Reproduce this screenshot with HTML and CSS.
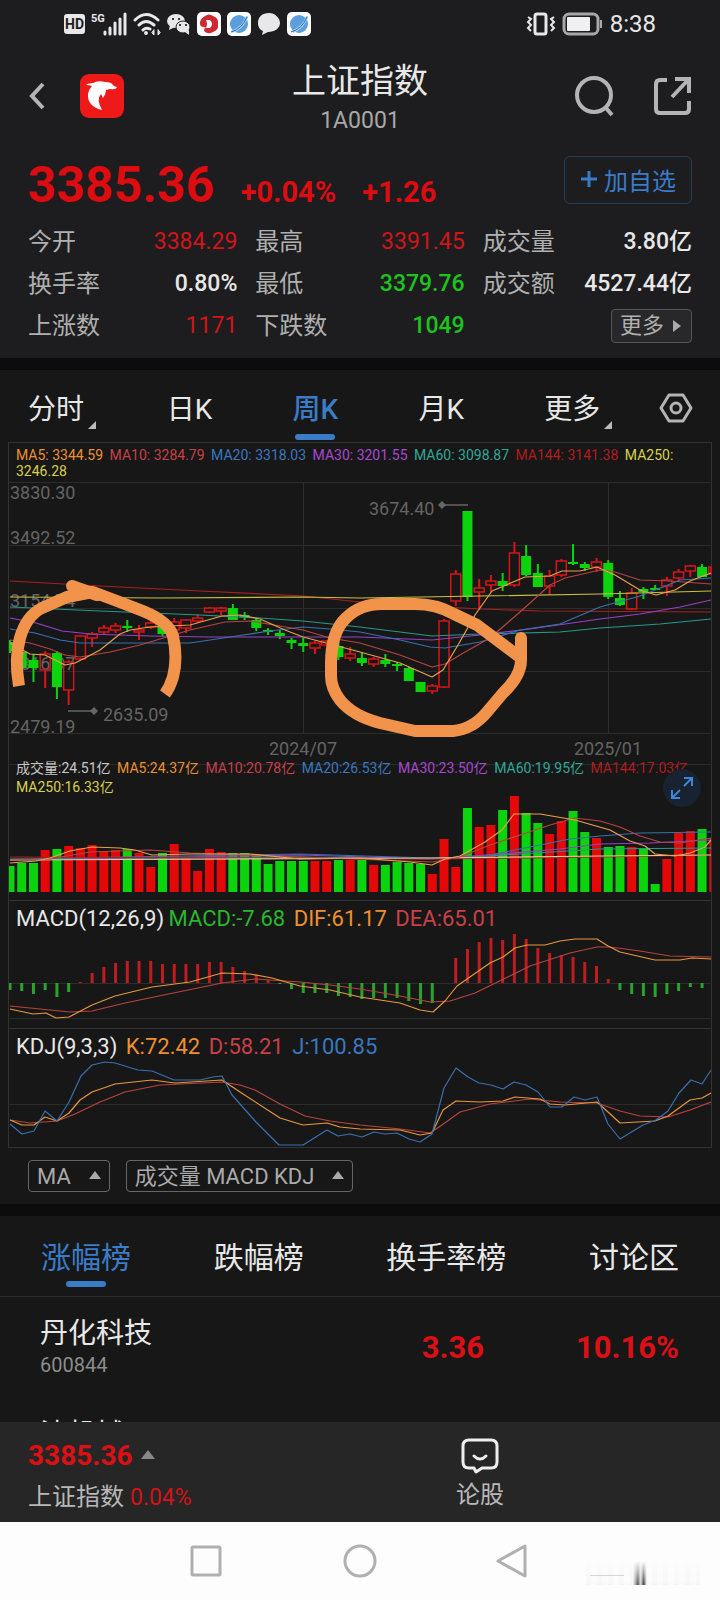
FILE: index.html
```
<!DOCTYPE html>
<html lang="zh-CN">
<head>
    <meta charset="UTF-8">
    <meta name="viewport" content="width=device-width, initial-scale=1.0">
    <title>上证指数 1A0001</title>
    <link rel="stylesheet" href="styles.css">
</head>
<body>

<div class="statusbar">
    <div class="status-left">
        <span class="hd">HD</span>
        <svg width="36" height="24" viewBox="0 0 36 24">
            <text x="0" y="10" class="net">5G</text>
            <path d="M14 22v-2M19 22v-6M24 22v-11M29 22v-15M34 22v-20" stroke="#e8e8e8" stroke-width="3" stroke-linecap="round"/>
        </svg>
        <svg width="28" height="24" viewBox="0 0 28 24" fill="none" stroke="#e8e8e8" stroke-width="3" stroke-linecap="round">
            <path d="M2 8Q13 -3 25 8M6 13Q13 6 21 13M10 18Q13 15 17 17"/>
            <circle cx="13" cy="21" r="1" stroke-width="2"/>
            <path d="M21 18v5l-2-2zM25 18v5l2-2z" stroke-width="1" fill="#e8e8e8"/>
        </svg>
        <svg width="24" height="24" viewBox="0 0 24 24">
            <ellipse cx="9" cy="9" rx="9" ry="7" fill="#e8e8e8"/>
            <path d="M3 13l-1 5 6-3z" fill="#e8e8e8"/>
            <ellipse cx="16" cy="15" rx="7" ry="6" fill="#e8e8e8" stroke="#1d1d1f"/>
            <path d="M18 20l4 3v-5z" fill="#e8e8e8"/>
            <circle cx="6" cy="7" r="1"/><circle cx="12" cy="7" r="1"/><circle cx="13" cy="13" r="1"/><circle cx="19" cy="13" r="1"/>
        </svg>
        <svg width="24" height="24" viewBox="0 0 24 24">
            <rect width="24" height="24" rx="5" fill="#fff"/>
            <path d="M8 4Q12 1 16 4Q22 6 21 12Q22 18 16 20Q11 23 7 19Q7 16 9 15Q2 16 3 10Q4 6 8 4z" fill="#d02830"/>
            <path d="M9 8h4q4 4 0 8H9q2-4 0-8z" fill="#fff"/>
        </svg>
        <svg width="24" height="24" viewBox="0 0 24 24">
            <rect width="24" height="24" rx="5" fill="#fff"/>
            <circle cx="12" cy="12" r="9" fill="#5a9fdc"/>
            <path d="M4 19Q16 14 19 4Q23 3 20 8Q15 18 6 21z" fill="#a8d4f8"/>
            <path d="M4 20Q15 17 20 5" fill="none" stroke="#2868a8"/>
        </svg>
        <svg width="24" height="24" viewBox="0 0 24 24">
            <path d="M12 1C5 1 1 5 1 11c0 4 2 7 5 8l-1 4 6-3c7 0 12-4 12-9S18 1 12 1z" fill="#e8e8e8"/>
        </svg>
        <svg width="24" height="24" viewBox="0 0 24 24">
            <rect width="24" height="24" rx="5" fill="#fff"/>
            <circle cx="12" cy="12" r="9" fill="#5a9fdc"/>
            <path d="M4 19Q16 14 19 4Q23 3 20 8Q15 18 6 21z" fill="#a8d4f8"/>
            <path d="M4 20Q15 17 20 5" fill="none" stroke="#2868a8"/>
        </svg>
    </div>
    <div class="status-right">
        <svg width="30" height="24" viewBox="0 0 30 24" fill="none" stroke="#e8e8e8" stroke-width="2">
            <rect x="9" y="2" width="11" height="20" rx="2" stroke-width="3"/>
            <path d="M2 5l3 2-3 3 3 3-3 3 3 3M28 5l-3 2 3 3-3 3 3 3-3 3"/>
        </svg>
        <svg width="42" height="24" viewBox="0 0 42 24">
            <rect x="2" y="2" width="34" height="20" rx="5" fill="none" stroke="#a8a8a8" stroke-width="3"/>
            <rect x="5" y="5" width="23" height="14" rx="1" fill="#f0f0f0"/>
            <path d="M39 8v8" stroke="#a8a8a8" stroke-width="2"/>
        </svg>
        <span class="clock">8:38</span>
    </div>
</div>

<header class="topbar">
    <div class="side">
        <button class="icon-btn" aria-label="返回">
            <svg width="18" height="30" viewBox="0 0 18 30"><path d="M15 3L4 15l11 12" fill="none" stroke="#b4b4b4" stroke-width="4"/></svg>
        </button>
        <a href="#" class="logo" aria-label="首页">
            <svg width="44" height="44" viewBox="0 0 44 44">
                <rect width="44" height="44" rx="9" fill="#ee1a1a"/>
                <path d="M6 11Q8 9 13 9Q18 6 25 8Q28 8 31 9Q33 12 37 13Q36 16 30 15L26 16Q26 20 23 24L21 20Q16 25 22 36Q7 32 8 20Q9 15 12 12Q9 11 6 11z" fill="#fff"/>
            </svg>
        </a>
    </div>
    <div class="heading">
        <h1>上证指数</h1>
        <p>1A0001</p>
    </div>
    <div class="side right">
        <button class="icon-btn" aria-label="搜索">
            <svg width="40" height="42" viewBox="0 0 40 42" fill="none" stroke="#b4b4b4" stroke-width="4"><circle cx="20" cy="20" r="17"/><path d="M32 33l6 7"/></svg>
        </button>
        <button class="icon-btn" aria-label="分享">
            <svg width="40" height="42" viewBox="0 0 40 42" fill="none" stroke="#b4b4b4" stroke-width="4"><path d="M15 5H8Q4 5 4 9v25q0 4 4 4h25q4 0 4-4v-8M23 4h14v14M36 5L20 22"/></svg>
        </button>
    </div>
</header>

<section class="quote">
    <div class="price-row">
        <strong class="price">3385.36</strong>
        <span class="change">+0.04%</span>
        <span class="change">+1.26</span>
        <button class="add"><svg width="18" height="18" viewBox="0 0 18 18"><path d="M9 1v16M1 9h16" stroke="#3a7cc8" stroke-width="3"/></svg>加自选</button>
    </div>
    <dl class="stats">
        <div><dt>今开</dt><dd class="up">3384.29</dd></div>
        <div><dt>最高</dt><dd class="up">3391.45</dd></div>
        <div><dt>成交量</dt><dd>3.80亿</dd></div>
        <div><dt>换手率</dt><dd>0.80%</dd></div>
        <div><dt>最低</dt><dd class="down">3379.76</dd></div>
        <div><dt>成交额</dt><dd>4527.44亿</dd></div>
        <div><dt>上涨数</dt><dd class="up">1171</dd></div>
        <div><dt>下跌数</dt><dd class="down">1049</dd></div>
        <div><button class="more">更多<svg width="8" height="12" viewBox="0 0 8 12"><path d="M0 0l8 6-8 6z" fill="#aaa"/></svg></button></div>
    </dl>
</section>

<section class="panel">
    <nav class="periods">
        <button>分时<i class="corner"></i></button>
        <button>日K</button>
        <button class="active">周K</button>
        <button>月K</button>
        <button>更多<i class="corner"></i></button>
        <button class="gear" aria-label="设置">
            <svg width="34" height="34" viewBox="0 0 34 34" fill="none" stroke="#b4b4b4" stroke-width="3"><path d="M10 4h14l8 13-8 13H10L2 17z" stroke-linejoin="round"/><circle cx="17" cy="17" r="5"/></svg>
        </button>
    </nav>

    <div class="chart">
        <p class="legend ma">
            <span class="c5">MA5: 3344.59</span> <span class="c10">MA10: 3284.79</span> <span class="c20">MA20: 3318.03</span> <span class="c30">MA30: 3201.55</span> <span class="c60">MA60: 3098.87</span> <span class="c144">MA144: 3141.38</span> <span class="c250">MA250:</span> <span class="c250">3246.28</span>
        </p>
        <svg id="kline" viewBox="9 2 702 276"></svg>

        <div class="volume">
            <p class="legend vol">
                <span class="total">成交量:24.51亿</span> <span class="c5">MA5:24.37亿</span> <span class="c10">MA10:20.78亿</span> <span class="c20">MA20:26.53亿</span> <span class="c30">MA30:23.50亿</span> <span class="c60">MA60:19.95亿</span> <span class="c144">MA144:17.03亿</span> <span class="c250">MA250:16.33亿</span>
            </p>
            <svg id="volume" viewBox="9 46 702 104"></svg>
            <button class="expand" aria-label="全屏">
                <svg width="24" height="24" viewBox="0 0 24 24" fill="none" stroke="#3f86d6" stroke-width="2"><path d="M14 2h8v8M22 2l-8 8M2 14v8h8M2 22l8-8"/></svg>
            </button>
        </div>

        <p class="legend big">
            <span>MACD(12,26,9)</span> <span class="cmacd">MACD:-7.68</span> <span class="c5 gap">DIF:61.17</span> <span class="c10 gap">DEA:65.01</span>
        </p>
        <svg id="macd" viewBox="9 37 702 87"></svg>

        <p class="legend big kdj">
            <span>KDJ(9,3,3)</span> <span class="c5 gap">K:72.42</span> <span class="c10 gap">D:58.21</span> <span class="c20 gap">J:100.85</span>
        </p>
        <svg id="kdj" viewBox="9 165 702 87"></svg>
    </div>

    <div class="indicators">
        <button>MA<i class="tri"></i></button>
        <button>成交量 MACD KDJ<i class="tri"></i></button>
    </div>
</section>

<section class="rank">
    <nav class="rank-tabs">
        <button class="active">涨幅榜</button>
        <button>跌幅榜</button>
        <button>换手率榜</button>
        <button>讨论区</button>
    </nav>
    <table class="stocks">
        <tr>
            <td>丹化科技<small>600844</small></td>
            <td class="num">3.36</td>
            <td class="num">10.16%</td>
        </tr>
        <tr>
            <td>沈机械<small>000410</small></td>
            <td class="num"></td>
            <td class="num"></td>
        </tr>
    </table>
</section>

<footer class="bottom">
    <div class="index">
        <strong>3385.36<i class="tri"></i></strong>
        <p>上证指数 <span class="up">0.04%</span></p>
    </div>
    <a href="#" class="talk">
        <svg width="38" height="36" viewBox="0 0 38 36" fill="none" stroke="#eee" stroke-width="3" stroke-linejoin="round" stroke-linecap="round"><path d="M8 2h22q6 0 6 6v16q0 6-6 6h-9l-6 4-2-4H8q-6 0-6-6V8q0-6 6-6zM13 18q6 6 12 0"/></svg>
        论股
    </a>
</footer>

<nav class="sysnav">
    <button aria-label="最近任务"><svg width="34" height="34" viewBox="0 0 34 34"><rect x="2" y="3" width="28" height="28" rx="1"/></svg></button>
    <button aria-label="主页"><svg width="34" height="34" viewBox="0 0 34 34"><circle cx="17" cy="17" r="15"/></svg></button>
    <button aria-label="返回"><svg width="34" height="34" viewBox="0 0 34 34"><path d="M29 2v30L2 17z"/></svg></button>
    <i class="smudge"></i>
</nav>

<script src="script.js"></script>
</body>
</html>
```
FILE: styles.css
```
* {
    box-sizing: border-box;
}
body {
    margin: 0;
    height: 100vh;
    display: flex;
    flex-direction: column;
    overflow: hidden;
    background: #171717;
    color: #e8e8e8;
    font-family: Roboto, "Noto Sans CJK SC", sans-serif;
}
h1, p, dl, dd {
    margin: 0;
}
button {
    padding: 0;
    border: none;
    background: none;
    color: inherit;
    font: inherit;
    cursor: pointer;
}
svg {
    display: block;
}
a {
    color: inherit;
    text-decoration: none;
}
.up {
    color: #d01418;
}
.down {
    color: #1cc41c;
}

/* status bar */
.statusbar {
    flex: none;
    display: flex;
    justify-content: space-between;
    align-items: center;
    height: 48px;
    padding: 0 64px;
    background: #1d1d1f;
}
.status-left, .status-right {
    display: flex;
    align-items: center;
    gap: 6px;
}
.hd {
    padding: 0 1px;
    border-radius: 3px;
    background: #e8e8e8;
    color: #1d1d1f;
    font-size: 14px;
    font-weight: 700;
    line-height: 20px;
}
.net {
    fill: #e8e8e8;
    font-size: 11px;
    font-weight: 700;
}
.clock {
    font-size: 24px;
    line-height: 28px;
}

/* header */
.topbar {
    flex: none;
    display: grid;
    grid-template-columns: 1fr auto 1fr;
    height: 92px;
    padding: 0 28px;
    background: #1d1d1f;
}
.side {
    display: flex;
    align-items: center;
    gap: 34px;
    padding-top: 4px;
}
.right {
    justify-content: flex-end;
    gap: 38px;
}
.heading {
    padding-top: 13px;
    text-align: center;
}
.heading h1 {
    font-size: 34px;
    font-weight: 400;
    line-height: 40px;
}
.heading p {
    padding-top: 7px;
    color: #a8a8a8;
    font-size: 23px;
    line-height: 26px;
}

/* quote */
.quote {
    flex: none;
    padding: 16px 28px 11px;
    background: #1d1d1f;
    border-bottom: 12px solid #0c0c0c;
}
.price-row {
    display: flex;
    align-items: baseline;
    height: 65px;
    color: #dc0c10;
}
.price {
    font-size: 50px;
    line-height: 58px;
}
.change {
    margin-left: 26px;
    font-size: 29px;
    font-weight: 700;
}
.add {
    display: flex;
    align-self: flex-start;
    align-items: center;
    gap: 6px;
    height: 48px;
    margin-left: auto;
    padding: 0 15px 2px;
    border: 1px solid #23395a;
    border-radius: 6px;
    color: #3a7cc8;
    font-size: 24px;
}
.stats {
    display: grid;
    grid-template-columns: repeat(3, 1fr);
    column-gap: 18px;
    font-size: 24px;
    line-height: 42px;
}
.stats div {
    display: flex;
    justify-content: space-between;
    align-items: center;
    height: 42px;
}
.stats dt {
    color: #b0b0b0;
}
.stats dd {
    font-size: 23px;
    font-weight: 500;
}
.stats .up {
    font-weight: 400;
}
.more {
    display: flex;
    align-items: center;
    gap: 9px;
    height: 34px;
    margin-left: auto;
    padding: 0 10px 0 8px;
    border: 1px solid #555;
    border-radius: 4px;
    background: #28282a;
    color: #b0b0b0;
    font-size: 22px;
    line-height: 32px;
}

/* period tabs */
.panel {
    flex: none;
    border-bottom: 12px solid #0c0c0c;
}
.periods {
    display: grid;
    grid-template-columns: 139fr 126fr 126fr 126fr 115fr 34px;
    height: 72px;
    padding: 0 27px 0 28px;
    font-size: 28px;
    line-height: 72px;
}
.periods button {
    position: relative;
    display: flex;
    align-items: center;
    justify-self: start;
    padding-top: 4px;
}
.periods .gear {
    padding-top: 0;
}
.active {
    position: relative;
    color: #3a7cc8;
}
.periods .active {
    font-weight: 500;
}
.active::after {
    content: "";
    position: absolute;
    left: 50%;
    bottom: 6px;
    width: 40px;
    height: 6px;
    margin-left: -20px;
    border-radius: 3px;
    background: #3a7cc8;
}
.corner {
    align-self: flex-end;
    margin: 0 0 17px 4px;
    border: 4px solid transparent;
    border-right-color: #bbb;
    border-bottom-color: #bbb;
}

/* chart */
.chart {
    margin: 0 8px;
    border: 1px solid #333;
}
.chart > svg, .volume > svg {
    width: 100%;
    height: auto;
}
#kline {
    overflow: visible;
}
.legend {
    padding: 0 7px;
}
.ma {
    padding-top: 4px;
    height: 39px;
    font-size: 14px;
    line-height: 16px;
}
.vol {
    padding-top: 1px;
    height: 38px;
    font-size: 14px;
    line-height: 19px;
}
.ma span, .vol span {
    margin-right: 3px;
}
.total {
    color: #c8c8c8;
}
.volume {
    position: relative;
}
.big {
    height: 32px;
    border-top: 1px solid #333;
    font-size: 22px;
    line-height: 36px;
}
.big span {
    margin-right: -1px;
}
.kdj {
    margin-top: 9px;
}
.big .gap {
    margin-left: 4px;
}
.c5 { color: #ee9030; }
.c10 { color: #c84048; }
.c20 { color: #3a78c0; }
.c30 { color: #a848d0; }
.c60 { color: #30a898; }
.c144 { color: #b01c20; }
.c250 { color: #d8d050; }
.cmacd { color: #28b82c; }
.axis {
    fill: #646464;
    font-size: 18px;
}
.expand {
    position: absolute;
    top: 11px;
    right: 10px;
    display: grid;
    place-items: center;
    width: 38px;
    height: 38px;
    border-radius: 50%;
    background: #182230;
}
.indicators {
    display: flex;
    gap: 16px;
    padding: 12px 28px;
}
.indicators button {
    display: flex;
    align-items: center;
    height: 32px;
    padding: 2px 8px 0;
    border: 1px solid #666;
    border-radius: 4px;
    color: #aaa;
    font-size: 22px;
    line-height: 30px;
}
.tri {
    display: inline-block;
    margin: 0 0 4px 18px;
    border: 6px solid transparent;
    border-top: none;
    border-bottom: 8px solid #aaa;
}

/* ranking */
.rank {
    flex: 1 1 0;
    min-height: 0;
    overflow: hidden;
}
.rank-tabs {
    display: flex;
    justify-content: space-between;
    height: 81px;
    padding: 0 41px;
    border-bottom: 1px solid #2c2c2c;
    font-size: 30px;
}
.rank-tabs button {
    padding-bottom: 3px;
}
.rank-tabs .active::after {
    bottom: 9px;
}
.stocks {
    width: 100%;
    border-collapse: collapse;
}
.stocks td {
    height: 101px;
    padding: 0 0 2px 40px;
    font-size: 28px;
    line-height: 36px;
}
.stocks small {
    display: block;
    color: #8c8c8c;
    font-size: 20px;
    line-height: 26px;
}
.stocks .num {
    width: 195px;
    padding: 0 41px 0 0;
    text-align: right;
    color: #dc1014;
    font-size: 31px;
    font-weight: 700;
}

/* bottom bar */
.bottom {
    flex: none;
    display: grid;
    grid-template-columns: 1fr 1fr;
    height: 100px;
    padding: 0 0 0 28px;
    background: #262626;
    color: #b8b8b8;
    font-size: 24px;
}
.index {
    padding-top: 15px;
}
.index strong {
    display: flex;
    align-items: center;
    color: #dc1014;
    font-size: 28px;
    line-height: 38px;
}
.index .tri {
    margin: 0 0 4px 8px;
    border-width: 0 7px 9px;
    border-bottom-color: #888;
}
.index p {
    padding-top: 3px;
    line-height: 38px;
}
.index .up {
    font-size: 23px;
}
.talk {
    display: flex;
    flex-direction: column;
    align-items: center;
    justify-self: start;
    gap: 4px;
    padding: 16px 0 0 82px;
    line-height: 34px;
}

/* system keys */
.sysnav {
    position: relative;
    flex: none;
    display: flex;
    justify-content: center;
    gap: 119px;
    height: 78px;
    background: #fdfdfd;
}
.sysnav svg {
    fill: none;
    stroke: #b0b0b0;
    stroke-width: 3;
    stroke-linejoin: round;
}
.smudge {
    position: absolute;
    right: 20px;
    bottom: 15px;
    width: 114px;
    height: 24px;
    background:
        linear-gradient(90deg, transparent, #555 35%, #ddd 55%, #444 75%, transparent) 47px 0 / 14px 24px no-repeat,
        linear-gradient(#bbb, #bbb) 4px 14px / 34px 1px no-repeat,
        repeating-linear-gradient(90deg, #f6f6f6 0 5px, #fbfbfb 5px 11px);
    -webkit-mask-image: linear-gradient(transparent, #000);
    mask-image: linear-gradient(transparent, #000);
}
```
FILE: script.js
```
const RED = '#d81418';
const GREEN = '#0cd40c';
const MA = {
    5: '#e8a050', 10: '#b84440', 20: '#3870b0', 30: '#9840c8',
    60: '#289888', 144: '#a82020', 250: '#c8c040'
};
const STEP = 11.73;
const cx = i => 10 + i * STEP;

// type, high, body top, body bottom, low
const candles = [
    ['g', 160, 162, 171, 173], ['g', 170, 172, 188, 190], ['g', 174, 180, 188, 202], ['r', 171, 174, 190, 208],
    ['g', 171, 173, 207, 219], ['r', 180, 182, 210, 225], ['r', 155, 156, 179, 180], ['r', 152, 154, 158, 167],
    ['r', 145, 148, 152, 155], ['r', 143, 146, 150, 153], ['g', 140, 146, 148, 152], ['r', 145, 150, 152, 160],
    ['r', 139, 143, 147, 149], ['g', 145, 146, 154, 156], ['r', 138, 142, 150, 152], ['r', 139, 140, 148, 153],
    ['r', 135, 138, 141, 143], ['r', 127, 128, 132, 133], ['r', 127, 128, 131, 135], ['g', 124, 128, 140, 140],
    ['g', 132, 135, 137, 140], ['g', 138, 140, 148, 151], ['g', 148, 150, 152, 155], ['g', 150, 153, 156, 159],
    ['g', 158, 160, 163, 169], ['g', 158, 163, 166, 172], ['r', 161, 163, 168, 174], ['r', 160, 161, 165, 166],
    ['g', 162, 166, 177, 180], ['r', 167, 174, 178, 181], ['g', 172, 178, 183, 186], ['r', 177, 179, 184, 187],
    ['g', 174, 180, 184, 187], ['g', 182, 184, 186, 191], ['g', 187, 188, 201, 201], ['g', 202, 202, 212, 212],
    ['r', 204, 206, 211, 214], ['r', 139, 141, 207, 208], ['r', 90, 94, 121, 126], ['g', 31, 31, 117, 121],
    ['r', 99, 108, 112, 128], ['r', 95, 101, 105, 112], ['g', 93, 101, 106, 111], ['r', 62, 73, 105, 107],
    ['g', 65, 76, 95, 96], ['g', 84, 93, 107, 107], ['r', 90, 96, 106, 115], ['r', 79, 81, 95, 97],
    ['g', 64, 82, 84, 85], ['g', 82, 84, 88, 91], ['r', 78, 82, 87, 92], ['g', 80, 83, 117, 119],
    ['g', 111, 118, 125, 126], ['r', 108, 113, 129, 130], ['g', 107, 109, 112, 119], ['g', 105, 108, 110, 110],
    ['r', 97, 100, 106, 116], ['r', 89, 92, 98, 100], ['r', 85, 86, 91, 97], ['g', 84, 87, 97, 97],
    ['r', 87, 87, 94, 94]
];

const volumes = [
    26, 29, 29, 42, 43, 46, 44, 47, 41, 42, 43, 39, 25, 39, 48, 34, 21, 43, 40, 39, 39,
    38, 28, 31, 31, 31, 31, 31, 32, 32, 32, 27, 27, 30, 29, 28, 18, 53, 25, 84, 65, 67,
    82, 96, 79, 69, 58, 71, 81, 60, 54, 45, 46, 45, 44, 8, 33, 59, 61, 63, 54
];

const macdBars = [
    -7, -8, -11, -7, -14, -9, 1, 10, 16, 20, 22, 22, 22, 19, 19, 19, 19, 21, 21, 16, 12,
    8, 3, -1, -6, -10, -10, -10, -13, -14, -16, -15, -15, -15, -18, -21, -20, 0, 25, 34, 41,
    45, 43, 49, 44, 35, 30, 28, 26, 21, 17, 4, -7, -11, -13, -14, -11, -8, -4, -5
];

function line(color, points) {
    return `<polyline points="${points}" fill="none" stroke="${color}" stroke-width="1.2" stroke-linejoin="round"/>`;
}

function grid(d) {
    return `<path d="${d}" stroke="#2c2c2c" fill="none"/>`;
}

function drawKline() {
    let s = grid('M9 2.5H711M9 65.5H711M9 128.5H711M9 191.5H711M9 253.5H711M9 284.5H711M303.5 2V254M608.5 2V254');
    [['3830.30', 19], ['3492.52', 64], ['3154.74', 127], ['2816.97', 190], ['2479.19', 253]].forEach(([t, y]) => {
        s += `<text class="axis" x="10" y="${y}">${t}</text>`;
    });
    s += '<text class="axis" x="303" y="275" text-anchor="middle">2024/07</text>';
    s += '<text class="axis" x="608" y="275" text-anchor="middle">2025/01</text>';

    candles.forEach(([type, high, top, bottom, low], i) => {
        const x = cx(i);
        const color = type === 'r' ? RED : GREEN;
        const left = Math.max(x - 5, 9);
        const w = Math.min(x + 5, 711) - left;
        s += `<path d="M${x} ${high}V${top}M${x} ${bottom}V${low}" stroke="${color}" stroke-width="2"/>`;
        s += `<rect x="${left}" y="${top}" width="${w}" height="${bottom - top}" fill="${type === 'r' ? 'none' : color}" stroke="${color}" stroke-width="${type === 'r' ? 1.5 : 0}"/>`;
    });

    s += line(MA[144], '10,101 100,106 200,111 303,116 360,122 480,129 540,131 711,132');
    s += line(MA[250], '10,117 160,118 303,117 360,118 480,116 600,114 711,111');
    s += line(MA[60], '10,127 100,131 200,135 260,138 303,141 360,147 432,156 480,154 560,152 600,148 660,144 711,139');
    s += line(MA[30], '10,138 36,143 62,151 90,154 150,156 210,157 303,157 360,157 432,160 480,155 530,149 600,139 640,134 680,127 711,120');
    s += line(MA[20], '10,149 35,153 60,160 80,163 190,163 230,157 270,151 303,147 330,149 360,152 400,160 430,167 445,168 480,162 520,150 560,144 600,127 640,116 663,107 680,100 711,98');
    s += line(MA[10], '10,160 30,163 50,169 65,175 80,177 110,172 140,165 190,150 225,142 250,141 280,146 303,150 330,158 360,163 400,175 432,187 445,184 465,172 490,158 520,132 550,105 565,98 600,90 615,92 640,100 670,101 711,104');
    s += line(MA[5], '10,163 30,174 45,175 65,185 75,183 85,178 100,170 120,154 130,150 150,147 190,145 222,136 240,135 260,139 285,150 303,157 330,164 360,172 400,183 432,197 443,190 458,165 475,135 492,111 525,97 550,96 562,91 580,91 597,87 615,95 640,110 656,115 675,110 690,101 711,93');

    // high / low markers
    s += '<path d="M442 25H468M68 231H94" stroke="#666" stroke-width="1.5"/>';
    s += '<path d="M438 25l4-4 4 4-4 4zM90 231l4-4 4 4-4 4z" fill="#666"/>';
    s += '<text class="axis" x="369" y="35">3674.40</text><text class="axis" x="103" y="241">2635.09</text>';

    // pen marks
    s += '<g fill="none" stroke="#f2934b" stroke-width="12" stroke-linejoin="round">';
    s += '<path d="M19 206C16 188 16 172 20 158C24 144 32 133 42 128L67 117L93 112L117 121L143 131C160 138 170 146 173 156Q178 178 173 197Q170 207 165 214"/>';
    s += '<path d="M72 106L97 115" stroke-linecap="round"/>';
    s += '<path d="M521 158V180Q521 196 503 213L487 232Q473 249 453 251H415L380 243Q353 236 340 220Q331 208 331 196V184Q331 152 346 138Q360 124 382 124H415Q436 124 454 134L477 145L497 160L521 178" stroke-linecap="round"/>';
    s += '</g>';
    document.getElementById('kline').innerHTML = s;
}

function drawVolume() {
    let s = '';
    volumes.forEach((h, i) => {
        const left = Math.max(cx(i) - 4.5, 9);
        const w = Math.min(cx(i) + 4.5, 711) - left;
        s += `<rect x="${left}" y="${142 - h}" width="${w}" height="${h}" fill="${candles[i][0] === 'r' ? '#e40808' : GREEN}"/>`;
    });
    s += line(MA[60], '10,109 300,107 430,109 520,104 600,99 711,98');
    s += line(MA[30], '10,110 300,105 430,109 500,104 560,99 600,94 650,93 711,90');
    s += line(MA[20], '10,110 60,108 300,104 430,108 480,107 530,97 570,89 600,86 640,83 711,82');
    s += line(MA[144], '10,107 430,109 600,107 711,105');
    s += line('#e8c890', '10,110 430,108 600,106 711,105');
    s += line(MA[10], '10,110 50,109 90,102 150,100 190,103 300,107 432,112 460,107 490,95 520,85 550,75 575,68 600,71 620,77 640,86 660,92 680,93 711,88');
    s += line(MA[5], '10,113 36,111 50,108 70,101 92,97 120,98 135,100 152,105 190,104 250,104 300,109 360,108 410,112 432,115 445,109 460,106 485,92 502,80 514,64 540,64 575,70 610,80 630,91 645,96 655,104 675,106 690,103 705,97 711,90');
    document.getElementById('volume').innerHTML = s;
}

function drawMacd() {
    let s = grid('M9 88.5H711M9 123.5H711');
    macdBars.forEach((v, i) => {
        s += `<path d="M${cx(i)} 88V${88 - v}" stroke="${v > 0 ? '#c01c20' : '#28a42c'}" stroke-width="3"/>`;
    });
    s += line(MA[10], '10,111 70,117 92,116 125,108 222,88 255,84 300,87 330,90 360,94 400,101 430,107 450,106 475,98 530,71 570,58 597,52 610,52 640,56 670,61 711,62');
    s += line('#e8983c', '10,114 33,119 46,118 56,123 69,122 92,110 115,101 152,92 190,87 222,78 250,79 272,83 300,91 330,95 360,102 400,108 420,115 433,117 445,106 457,91 490,68 503,62 515,53 527,50 545,50 560,46 575,44 597,44 608,51 620,57 655,65 680,65 692,63 711,64');
    document.getElementById('macd').innerHTML = s;
}

function drawKdj() {
    let s = grid('M9 209.5H711');
    s += line(MA[10], '10,225 30,228 57,226 75,219 100,207 125,197 160,190 222,187 240,190 255,195 280,209 305,221 330,226 360,230 400,234 430,238 442,230 460,217 490,209 530,204 560,207 597,208 620,216 640,221 668,222 690,215 711,207');
    s += line('#e8983c', '10,225 22,230 34,230 45,222 57,226 69,218 80,205 92,197 115,189 152,185 175,188 222,185 240,197 280,223 303,230 327,228 340,232 360,234 400,235 420,240 432,238 443,215 456,206 480,207 503,206 515,202 540,204 550,209 565,210 597,207 608,217 620,228 655,226 668,221 690,205 702,203 711,198');
    s += line(MA[20], '10,229 22,239 34,236 45,216 57,226 69,207 81,181 92,170 105,167 115,168 138,175 152,176 174,185 200,185 213,182 222,181 232,200 256,227 279,250 303,250 327,235 338,241 350,239 362,242 374,237 385,239 397,238 409,244 420,247 432,239 444,193 456,173 468,182 479,188 491,190 503,194 514,187 526,190 538,197 550,212 562,212 574,202 585,205 597,202 608,229 620,244 643,230 656,225 668,216 679,198 691,185 702,189 711,175');
    document.getElementById('kdj').innerHTML = s;
}

drawKline();
drawVolume();
drawMacd();
drawKdj();
```
